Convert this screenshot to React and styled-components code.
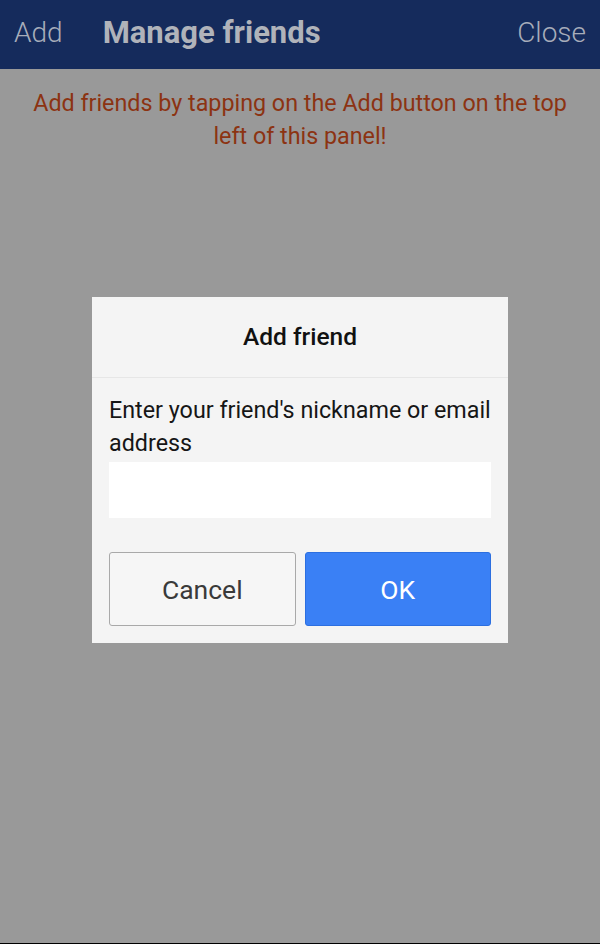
import React from 'react';
import styled, { createGlobalStyle } from 'styled-components';

const GlobalStyle = createGlobalStyle`
    html, body {
        margin: 0;
        padding: 0;
        background: #000;
    }
    * {
        box-sizing: border-box;
    }
`

const Page = styled.div`
    position: relative;
    height: 943px;
    background-color: #999999;
    font-family: Roboto, 'Noto Sans', sans-serif;
    overflow: hidden;
`

const Header = styled.div`
    height: 69px;
    background-color: #152b5c;
    display: flex;
    align-items: center;
    padding: 0 14px 4px 14px;
`

const HeaderLink = styled.span`
    font-size: 28px;
    font-weight: 300;
    color: #a7adba;
    margin-left: ${props => props.right ? 'auto' : '0'};
`

const Title = styled.h1`
    margin: 0 0 0 40px;
    font-size: 31px;
    font-weight: 700;
    color: #b0b3ba;
`

const Notice = styled.p`
    margin: 18px 20px 0;
    text-align: center;
    font-size: 23.3px;
    line-height: 33px;
    color: #8c3312;
`

const Overlay = styled.div`
    position: absolute;
    inset: 0;
    display: flex;
    align-items: center;
    justify-content: center;
    padding-bottom: 3px;
`

const Dialog = styled.div`
    width: 416px;
    background-color: #f4f4f4;
`

const DialogHeader = styled.div`
    height: 81px;
    display: flex;
    align-items: center;
    justify-content: center;
    border-bottom: 1px solid #e6e6e6;
    font-size: 24.5px;
    font-weight: 500;
    color: #111;
    padding-bottom: 2px;
`

const DialogBody = styled.div`
    padding: 16px 17px 17px;
`

const Label = styled.label`
    display: block;
    font-size: 23.3px;
    line-height: 33px;
    color: #161616;
`

const Input = styled.input`
    display: block;
    width: 100%;
    height: 56px;
    margin-top: 2px;
    border: none;
    background: #fff;
    outline: none;
    font-size: 22px;
    padding: 0 12px;
`

const Buttons = styled.div`
    display: grid;
    grid-template-columns: 1fr 1fr;
    gap: 9px;
    margin-top: 34px;
`

const Button = styled.button`
    height: 74px;
    border-radius: 3px;
    font-family: Roboto, 'Noto Sans', sans-serif;
    font-size: 26.5px;
    padding-top: 2px;
    border: 1px solid ${props => props.primary ? '#2c6fe0' : '#a9a9a9'};
    background-color: ${props => props.primary ? '#3a80f5' : '#f6f6f6'};
    color: ${props => props.primary ? '#fff' : '#3a3a3a'};
`

export default function App() {
    return (
        <>
            <GlobalStyle />
            <Page>
                <Header>
                    <HeaderLink>Add</HeaderLink>
                    <Title>Manage friends</Title>
                    <HeaderLink right>Close</HeaderLink>
                </Header>
                <Notice>Add friends by tapping on the Add button on the top left of this panel!</Notice>
                <Overlay>
                    <Dialog>
                        <DialogHeader>Add friend</DialogHeader>
                        <DialogBody>
                            <Label>Enter your friend's nickname or email address</Label>
                            <Input type="text" />
                            <Buttons>
                                <Button>Cancel</Button>
                                <Button primary>OK</Button>
                            </Buttons>
                        </DialogBody>
                    </Dialog>
                </Overlay>
            </Page>
        </>
    )
}
